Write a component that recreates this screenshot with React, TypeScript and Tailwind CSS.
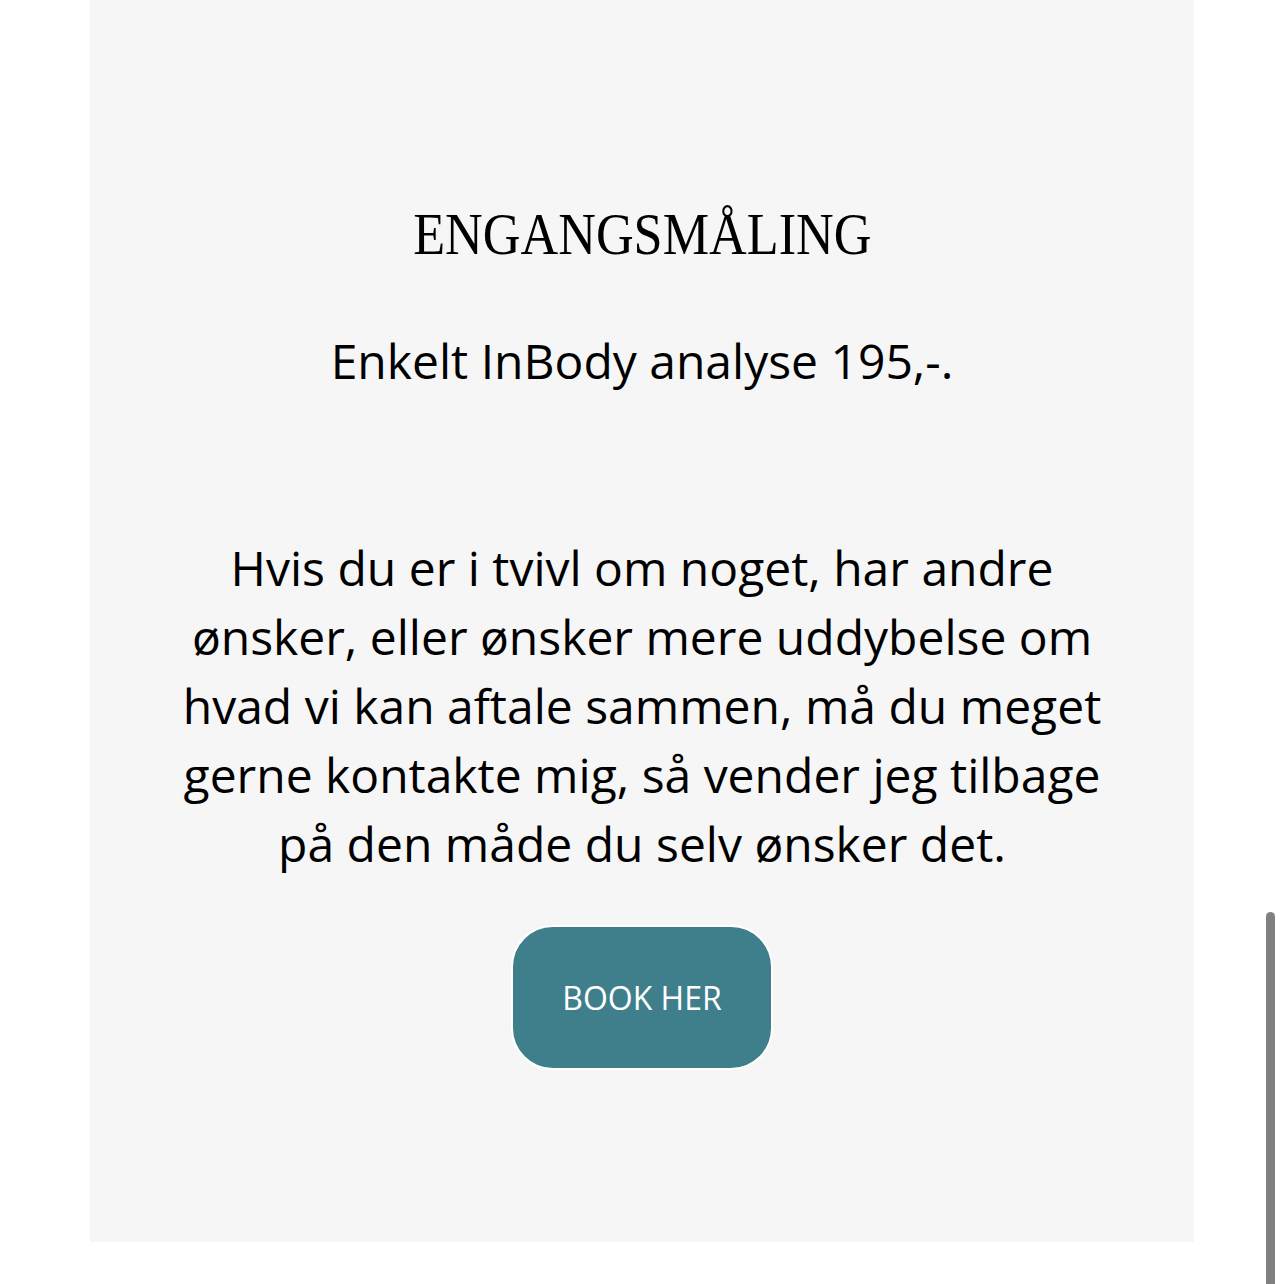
import React from "react";

const App = () => {
  return (
    <div className="relative min-h-[1284px] w-full bg-white">
      <section className="mx-[90px] w-[1104px] bg-[#f6f6f6] pb-[172px] pt-[196px]">
        <div className="flex flex-col items-center text-black">
          <h2
            className="origin-center scale-x-[0.87] text-[60px] leading-[76px] tracking-normal"
            style={{ fontFamily: '"Liberation Serif", serif' }}
          >
            ENGANGSMÅLING
          </h2>

          <p
            className="mt-[61px] text-[48px] leading-[56px]"
            style={{ fontFamily: '"Open Sans", sans-serif' }}
          >
            Enkelt InBody analyse 195,-.
          </p>

          <p
            className="mt-[144px] w-[928px] text-center text-[48px] leading-[69px]"
            style={{ fontFamily: '"Open Sans", sans-serif' }}
          >
            Hvis du er i tvivl om noget, har andre ønsker, eller ønsker mere
            uddybelse om hvad vi kan aftale sammen, må du meget gerne kontakte
            mig, så vender jeg tilbage på den måde du selv ønsker det.
          </p>

          <a
            className="mt-[47px] flex h-[145px] w-[262px] cursor-pointer items-center justify-center rounded-[42px] border-2 border-white bg-[#3f7f8b] text-[32px] text-white"
            style={{ fontFamily: '"Open Sans", sans-serif' }}
          >
            BOOK HER
          </a>
        </div>
      </section>

      {/* scrollbar thumb */}
      <div className="absolute right-[9px] top-[912px] h-[372px] w-[9px] rounded-t-full bg-[#808080]" />
    </div>
  );
};

export default App;
